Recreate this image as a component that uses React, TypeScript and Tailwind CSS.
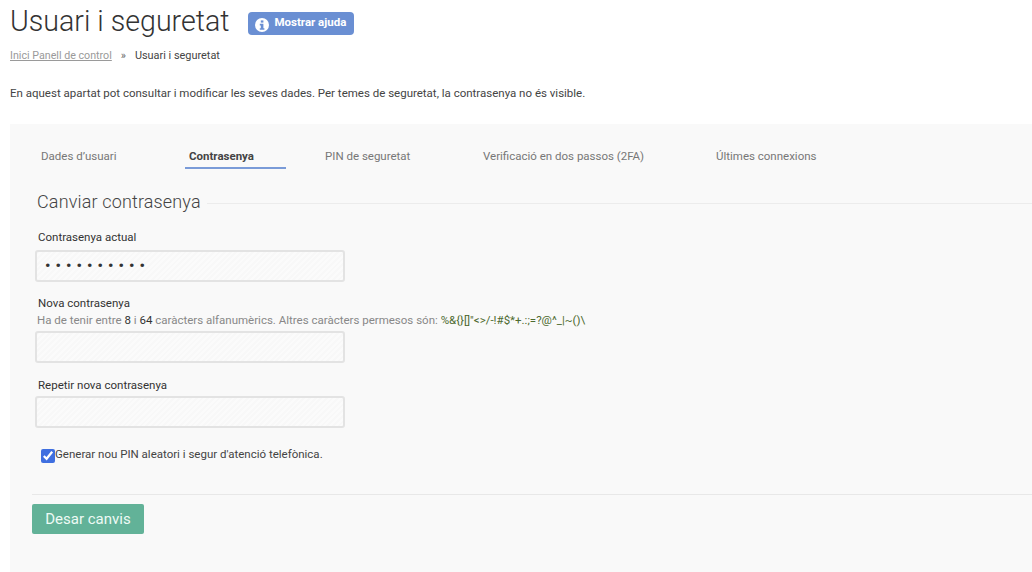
const hatch =
  'bg-[repeating-linear-gradient(135deg,#f8f8f8_0px,#f8f8f8_2px,#fbfbfb_2px,#fbfbfb_4px)]'

const tabs = [
  { label: 'Dades d’usuari', className: 'w-[175px] pl-[31px]' },
  { label: 'Contrasenya', className: 'w-[136px]', active: true },
  { label: 'PIN de seguretat', className: 'w-[162px] pl-[4px]' },
  { label: 'Verificació en dos passos (2FA)', className: 'w-[233px]' },
  { label: 'Últimes connexions', className: 'w-[180px]' },
]

function PasswordInput({ value }: { value?: string }) {
  return (
    <div
      className={`flex h-[32px] w-[310px] items-center rounded-[3px] border-2 border-[#e3e3e3] pl-[8px] ${hatch}`}
    >
      {value && <span className="text-[15px] font-bold tracking-[5.1px] text-[#333]">{value}</span>}
    </div>
  )
}

export default function App() {
  return (
    <div className="h-[572px] w-[1032px] overflow-hidden bg-white font-['Roboto',sans-serif] text-[#333]">
      <div className="flex h-[42px] items-center pl-[10px]">
        <h1 className="text-[28.6px] leading-[42px] font-light text-[#333]">Usuari i seguretat</h1>
        <button className="mt-[5px] ml-[18px] flex h-[23px] w-[106px] items-center rounded-[4px] bg-[#6a8fd3] pl-[7px] text-[11.5px] font-bold text-white">
          <svg width="14" height="14" viewBox="0 0 14 14" className="mt-[2px] shrink-0">
            <circle cx="7" cy="7" r="7" fill="#fff" />
            <rect x="5.8" y="2.4" width="2.6" height="2.2" fill="#6a8fd3" />
            <path d="M4.8 5.8h3.6v4.4h1v1.6H4.8v-1.6h1V7.4h-1z" fill="#6a8fd3" />
          </svg>
          <span className="ml-[6px] -mt-[1px]">Mostrar ajuda</span>
        </button>
      </div>

      <div className="mt-[7px] flex h-[14px] items-center pl-[10px] text-[10.9px] leading-[14px]">
        <a className="text-[10.7px] text-[#9a9a9a] underline">Inici Panell de control</a>
        <span className="ml-[9px] text-[#666]">»</span>
        <span className="ml-[9px] text-[#444]">Usuari i seguretat</span>
      </div>

      <p className="mt-[23px] h-[14px] pl-[10px] text-[11.5px] leading-[14px] text-[#444]">
        En aquest apartat pot consultar i modificar les seves dades. Per temes de seguretat, la contrasenya no és visible.
      </p>

      <main className="mt-[24px] ml-[10px] h-[448px] bg-[#f9f9f9]">
        <nav className="flex h-[45px] items-end pt-[21px] text-[11.5px]">
          {tabs.map((tab) => (
            <div key={tab.label} className={`h-[24px] shrink-0 ${tab.className}`}>
              <span
                className={
                  tab.active
                    ? 'block h-[24px] w-[101px] border-b-2 border-[#7a9bd8] pl-[4px] leading-[22px] font-bold text-[#444]'
                    : 'block leading-[22px] text-[#777]'
                }
              >
                {tab.label}
              </span>
            </div>
          ))}
        </nav>

        <div className="mt-[23px] flex h-[20px] items-center pl-[27px]">
          <h2 className="text-[18px] leading-[20px] font-light tracking-[0.15px] text-[#444]">Canviar contrasenya</h2>
          <div className="mt-[3px] ml-[6px] h-px flex-1 bg-[#ececec]" />
        </div>

        <form className="pl-[25px]">
          <label className="mt-[18px] block h-[14px] pl-[3px] text-[11.5px] leading-[14px] text-[#333]">Contrasenya actual</label>
          <div className="mt-[6px]">
            <PasswordInput value="••••••••••" />
          </div>

          <label className="mt-[14px] block h-[14px] pl-[3px] text-[11.5px] leading-[14px] text-[#333]">Nova contrasenya</label>
          <p className="mt-[3px] h-[14px] pl-[2px] text-[11.5px] leading-[14px] text-[#888]">
            Ha de tenir entre <span className="text-[#333]">8</span> i <span className="text-[#333]">64</span> caràcters
            alfanumèrics. Altres caràcters permesos són: <span className="text-[#4d6a2f]">%&amp;{'{}'}[]"&lt;&gt;/-!#$*+.:;=?@^_|~()\</span>
          </p>
          <div className="mt-[4px]">
            <PasswordInput />
          </div>

          <label className="mt-[15px] block h-[14px] pl-[3px] text-[11.5px] leading-[14px] text-[#333]">Repetir nova contrasenya</label>
          <div className="mt-[4px]">
            <PasswordInput />
          </div>

          <label className="mt-[21px] flex h-[14px] items-center pl-[6px] text-[11.5px] leading-[14px] text-[#444]">
            <input type="checkbox" defaultChecked className="m-0 h-[14px] w-[14px] accent-[#3f6fe0]" />
            <span className="-mt-[5px]">Generar nou PIN aleatori i segur d'atenció telefònica.</span>
          </label>
        </form>

        <div className="mt-[31px] ml-[22px] h-px bg-[#e8e8e8]" />
        <button className="mt-[9px] ml-[22px] h-[30px] w-[112px] rounded-[2px] bg-[#62b298] text-[15px] text-[#eefaf5]">
          Desar canvis
        </button>
      </main>
    </div>
  )
}
